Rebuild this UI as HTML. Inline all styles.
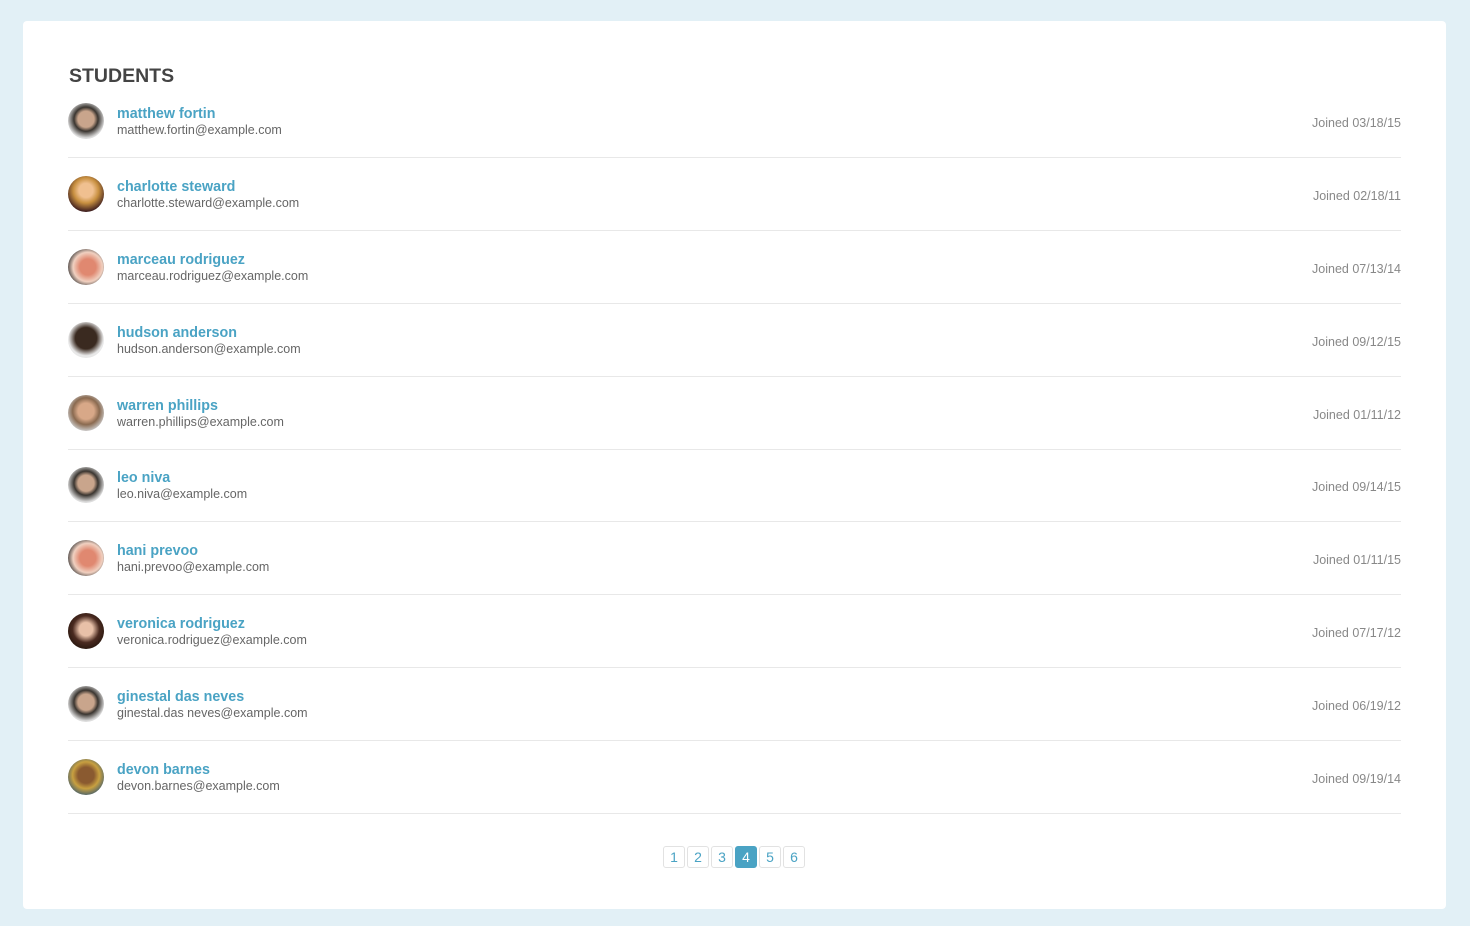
<!DOCTYPE html>
<html><head><style>
body{margin:0;background:#e2f0f6;font-family:"Liberation Sans",sans-serif;}
.card{position:absolute;left:23px;top:21px;width:1423px;height:888px;background:#fff;border-radius:4px;}
h1{position:absolute;left:46px;top:44px;margin:0;font-size:19.5px;font-weight:bold;color:#444;}
.row{position:absolute;left:45px;width:1333px;height:72px;border-bottom:1px solid #e8e8e8;}
.av{position:absolute;left:0;top:18px;width:36px;height:36px;border-radius:50%;}
.nm{position:absolute;left:49px;top:21px;font-size:14.3px;font-weight:bold;color:#4aa3c4;}
.em{position:absolute;left:49px;top:38px;font-size:12.5px;color:#666;}
.jd{position:absolute;right:0;top:31px;font-size:12.5px;color:#888;}
.pg{position:absolute;top:825px;left:640px;display:flex;gap:2px;}
.pg span{width:20px;height:20px;border:1px solid #e2e2e2;border-radius:3px;font-size:14px;color:#4aa3c4;text-align:center;line-height:20px;}
.pg span.a{background:#4aa3c4;color:#fff;border-color:#4aa3c4}
</style></head><body><div class="card">
<h1>STUDENTS</h1>
<div class="row" style="top:64px"><div class="av" style="background:radial-gradient(circle at 50% 45%,#c9a58c 0 30%,#3a3530 45%,#ddd 70%)"></div><div class="nm">matthew fortin</div><div class="em">matthew.fortin@example.com</div><div class="jd">Joined 03/18/15</div></div>
<div class="row" style="top:137px"><div class="av" style="background:radial-gradient(circle at 50% 40%,#f0c090 0 25%,#c89040 45%,#402020 75%)"></div><div class="nm">charlotte steward</div><div class="em">charlotte.steward@example.com</div><div class="jd">Joined 02/18/11</div></div>
<div class="row" style="top:210px"><div class="av" style="background:radial-gradient(circle at 55% 50%,#e08870 0 30%,#f0d0c0 55%,#333 80%)"></div><div class="nm">marceau rodriguez</div><div class="em">marceau.rodriguez@example.com</div><div class="jd">Joined 07/13/14</div></div>
<div class="row" style="top:283px"><div class="av" style="background:radial-gradient(circle at 50% 45%,#3a2a20 0 40%,#e8e8e8 65%)"></div><div class="nm">hudson anderson</div><div class="em">hudson.anderson@example.com</div><div class="jd">Joined 09/12/15</div></div>
<div class="row" style="top:356px"><div class="av" style="background:radial-gradient(circle at 50% 45%,#d8a888 0 30%,#8a6a50 50%,#ccc 75%)"></div><div class="nm">warren phillips</div><div class="em">warren.phillips@example.com</div><div class="jd">Joined 01/11/12</div></div>
<div class="row" style="top:428px"><div class="av" style="background:radial-gradient(circle at 50% 45%,#c9a58c 0 30%,#3a3530 45%,#ddd 70%)"></div><div class="nm">leo niva</div><div class="em">leo.niva@example.com</div><div class="jd">Joined 09/14/15</div></div>
<div class="row" style="top:501px"><div class="av" style="background:radial-gradient(circle at 55% 50%,#e08870 0 30%,#f0d0c0 55%,#333 80%)"></div><div class="nm">hani prevoo</div><div class="em">hani.prevoo@example.com</div><div class="jd">Joined 01/11/15</div></div>
<div class="row" style="top:574px"><div class="av" style="background:radial-gradient(circle at 50% 45%,#e8c0a8 0 25%,#4a2a20 50%,#2a1810 75%)"></div><div class="nm">veronica rodriguez</div><div class="em">veronica.rodriguez@example.com</div><div class="jd">Joined 07/17/12</div></div>
<div class="row" style="top:647px"><div class="av" style="background:radial-gradient(circle at 50% 45%,#c9a58c 0 30%,#3a3530 45%,#ddd 70%)"></div><div class="nm">ginestal das neves</div><div class="em">ginestal.das neves@example.com</div><div class="jd">Joined 06/19/12</div></div>
<div class="row" style="top:720px"><div class="av" style="background:radial-gradient(circle at 50% 45%,#8a5a30 0 30%,#c8a040 50%,#3a5a70 80%)"></div><div class="nm">devon barnes</div><div class="em">devon.barnes@example.com</div><div class="jd">Joined 09/19/14</div></div>
<div class="pg"><span>1</span><span>2</span><span>3</span><span class="a">4</span><span>5</span><span>6</span></div>
</div></body></html>
